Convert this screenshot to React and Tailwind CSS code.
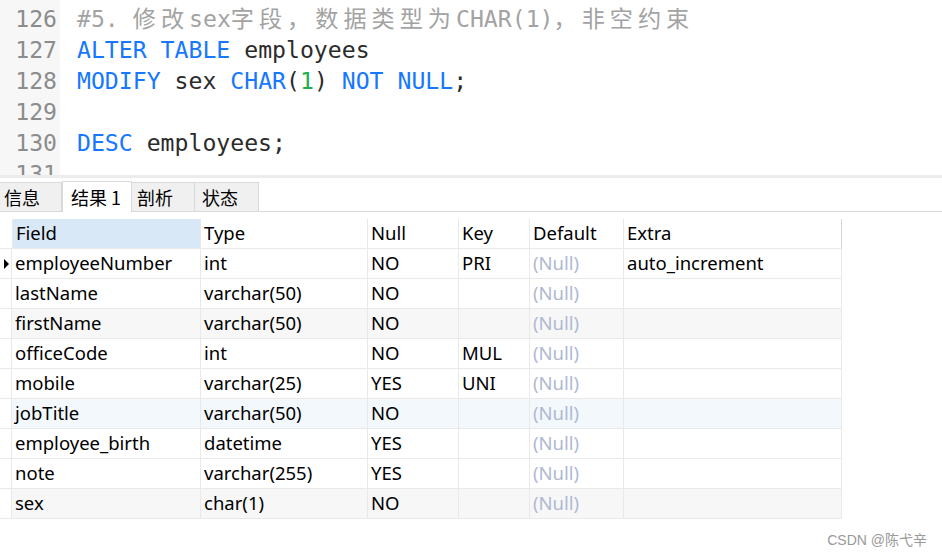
import React from "react";

const mono = { fontFamily: '"DejaVu Sans Mono", "Noto Sans CJK SC", monospace' };

// one line of code = array of [text, kind]
const codeLines = [
    [126, [["#5. ", "c"], ["修改", "cz"], ["sex", "c"], ["字段，数据类型为", "cz"], ["CHAR(1)", "c"], ["，非空约束", "cz"]]],
    [127, [["ALTER TABLE", "k"], [" employees", "t"]]],
    [128, [["MODIFY", "k"], [" sex ", "t"], ["CHAR", "k"], ["(", "t"], ["1", "n"], [") ", "t"], ["NOT NULL", "k"], [";", "t"]]],
    [129, []],
    [130, [["DESC", "k"], [" employees;", "t"]]],
    [131, []],
];

const kindClass = {
    c: "text-[#a3a3a3]",
    cz: "text-[#a3a3a3] tracking-[5px]",
    k: "text-[#1677ff]",
    t: "text-[#2b2b2b]",
    n: "text-[#1fae4b]",
};

const rows = [
    ["employeeNumber", "int", "NO", "PRI", "auto_increment"],
    ["lastName", "varchar(50)", "NO", "", ""],
    ["firstName", "varchar(50)", "NO", "", ""],
    ["officeCode", "int", "NO", "MUL", ""],
    ["mobile", "varchar(25)", "YES", "UNI", ""],
    ["jobTitle", "varchar(50)", "NO", "", ""],
    ["employee_birth", "datetime", "YES", "", ""],
    ["note", "varchar(255)", "YES", "", ""],
    ["sex", "char(1)", "NO", "", ""],
];

const rowBg = ["bg-white", "bg-white", "bg-[#f7f7f7]", "bg-white", "bg-white", "bg-[#f3f8fd]", "bg-white", "bg-white", "bg-[#f7f7f7]"];

const tabs = [
    { label: "信息", w: "w-[62px]", pl: "pl-[4px]" },
    { label: "结果 1", w: "w-[70px]", pl: "pl-[8px]", active: true },
    { label: "剖析", w: "w-[63px]", pl: "pl-[5px]" },
    { label: "状态", w: "w-[64px]", pl: "pl-[7px]" },
];

function Editor() {
    return (
        <div className="h-[175px] overflow-hidden flex text-[23.15px] leading-[31px]" style={mono}>
            <div className="w-[60px] bg-[#f7f7f7] pt-[4px] text-right pr-[3px] text-[#8c8c8c]">
                {codeLines.map(([n]) => <div key={n}>{n}</div>)}
            </div>
            <div className="pt-[4px] pl-[17px] whitespace-pre">
                {codeLines.map(([n, parts]) => (
                    <div key={n} className="h-[31px]">
                        {parts.map((p, i) => <span key={i} className={kindClass[p[1]]}>{p[0]}</span>)}
                    </div>
                ))}
            </div>
        </div>
    );
}

function Tabs() {
    return (
        <div className="flex items-end h-[32px] border-b border-[#d9d9d9] mt-[2px]" style={{ fontFamily: '"Noto Sans CJK SC", sans-serif' }}>
            {tabs.map(t => (
                <div key={t.label}
                    className={`${t.w} ${t.pl} flex items-center text-[18px] text-black border-t border-r border-[#d9d9d9] ${t.active ? "h-[31px] bg-white border-l -mb-px relative" : "h-[29px] bg-[#f0f0f0]"}`}>
                    {t.label}
                </div>
            ))}
        </div>
    );
}

function Cell({ children, className = "" }) {
    return <div className={`h-[30px] border-r border-b border-[#e9e9e9] pl-[3px] pb-[2px] flex items-center whitespace-nowrap overflow-hidden ${className}`}>{children}</div>;
}

function Table() {
    const heads = ["Field", "Type", "Null", "Key", "Default", "Extra"];
    return (
        <div className="mt-[7px] grid grid-cols-[12px_189px_167px_91px_71px_94px_218px] text-[18.5px] text-black" style={{ fontFamily: '"Noto Sans", sans-serif' }}>
            <div className="h-[30px] border-b border-[#e9e9e9]"></div>
            {heads.map((h, i) => (
                <Cell key={h} className={`${i === 0 ? "bg-[#d9e8f7] border-l border-l-[#e9e9e9]" : "bg-white"} ${i === 5 ? "border-r-[#d4d4d4]" : ""}`}>{h}</Cell>
            ))}
            {rows.map((r, ri) => (
                <React.Fragment key={r[0]}>
                    <div className="h-[30px] border-r border-b border-[#e9e9e9] flex items-center pl-[4px]">
                        {ri === 0 && <span className="w-0 h-0 border-y-[5px] border-y-transparent border-l-[5px] border-l-black"></span>}
                    </div>
                    <Cell className={rowBg[ri]}>{r[0]}</Cell>
                    <Cell className={rowBg[ri]}>{r[1]}</Cell>
                    <Cell className={rowBg[ri]}>{r[2]}</Cell>
                    <Cell className={rowBg[ri]}>{r[3]}</Cell>
                    <Cell className={`${rowBg[ri]} text-[#b0b9d2]`}>(Null)</Cell>
                    <Cell className={rowBg[ri]}>{r[4]}</Cell>
                </React.Fragment>
            ))}
        </div>
    );
}

export default function App() {
    return (
        <div className="w-[942px] h-[557px] bg-white overflow-hidden relative">
            <Editor />
            <div className="h-[3px] bg-[#ececec]"></div>
            <Tabs />
            <Table />
            <div className="absolute right-[15px] bottom-[6px] text-[14px] text-[#9a9a9a]" style={{ fontFamily: '"Liberation Sans", "Noto Sans CJK SC", sans-serif' }}>
                CSDN @陈弋辛
            </div>
        </div>
    );
}
